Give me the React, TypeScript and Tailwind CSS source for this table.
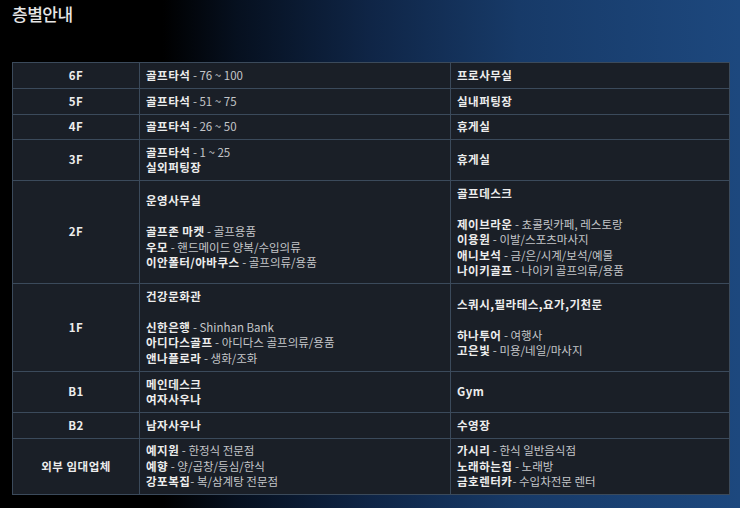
import React from "react";

type Line = { b?: string; t?: string } | null;

const rows: { floor: string; h: string; left: Line[]; right: Line[] }[] = [
  { floor: "6F", h: "h-[26px]", left: [{ b: "골프타석", t: " - 76 ~ 100" }], right: [{ b: "프로사무실" }] },
  { floor: "5F", h: "h-[26px]", left: [{ b: "골프타석", t: " - 51 ~ 75" }], right: [{ b: "실내퍼팅장" }] },
  { floor: "4F", h: "h-[25px]", left: [{ b: "골프타석", t: " - 26 ~ 50" }], right: [{ b: "휴게실" }] },
  {
    floor: "3F",
    h: "h-[41px]",
    left: [{ b: "골프타석", t: " - 1 ~ 25" }, { b: "실외퍼팅장" }],
    right: [{ b: "휴게실" }],
  },
  {
    floor: "2F",
    h: "h-[103px]",
    left: [
      { b: "운영사무실" },
      null,
      { b: "골프존 마켓", t: " - 골프용품" },
      { b: "우모", t: " - 핸드메이드 양복/수입의류" },
      { b: "이안폴터/아바쿠스", t: " - 골프의류/용품" },
    ],
    right: [
      { b: "골프데스크" },
      null,
      { b: "제이브라운", t: " - 쵸콜릿카페, 레스토랑" },
      { b: "이용원", t: " - 이발/스포츠마사지" },
      { b: "애니보석", t: " - 금/은/시계/보석/예물" },
      { b: "나이키골프", t: " - 나이키 골프의류/용품" },
    ],
  },
  {
    floor: "1F",
    h: "h-[88px]",
    left: [
      { b: "건강문화관" },
      null,
      { b: "신한은행", t: " - Shinhan Bank" },
      { b: "아디다스골프", t: " - 아디다스 골프의류/용품" },
      { b: "앤나플로라", t: " - 생화/조화" },
    ],
    right: [
      { b: "스쿼시,필라테스,요가,기천문" },
      null,
      { b: "하나투어", t: " - 여행사" },
      { b: "고은빛", t: " - 미용/네일/마사지" },
    ],
  },
  { floor: "B1", h: "h-[41px]", left: [{ b: "메인데스크" }, { b: "여자사우나" }], right: [{ b: "Gym" }] },
  { floor: "B2", h: "h-[26px]", left: [{ b: "남자사우나" }], right: [{ b: "수영장" }] },
  {
    floor: "외부 임대업체",
    h: "h-[56px]",
    left: [
      { b: "예지원", t: " - 한정식 전문점" },
      { b: "예향", t: " - 양/곱창/등심/한식" },
      { b: "강포복집", t: "- 복/삼계탕 전문점" },
    ],
    right: [
      { b: "가시리", t: " - 한식 일반음식점" },
      { b: "노래하는집", t: " - 노래방" },
      { b: "금호렌터카", t: "- 수입차전문 렌터" },
    ],
  },
];

function Cell({ lines }: { lines: Line[] }) {
  return (
    <td className="border border-[#3b4a5b] px-[6px] py-0 align-middle">
      {lines.map((l, i) =>
        l === null ? (
          <div key={i} className="h-[15.5px]" />
        ) : (
          <div key={i} className="h-[15.5px] whitespace-nowrap">
            {l.b && <span className="font-bold text-[#ededed] tracking-[0.5px]">{l.b}</span>}
            {l.t && <span className="text-[#c4c6c9]">{l.t}</span>}
          </div>
        )
      )}
    </td>
  );
}

export default function App() {
  return (
    <div
      className="w-[740px] h-[508px] overflow-hidden bg-[linear-gradient(90deg,#000_0%,#000_22%,#06101f_32%,#0f2546_50%,#173a68_70%,#1d487e_100%)]"
      style={{ fontFamily: '"Noto Sans CJK KR", "Noto Sans", sans-serif' }}
    >
      <div className="px-[12px] pt-[3px] h-[62px]">
        <h1 className="text-[17px] leading-[22px] text-[#e6e6e6] tracking-[-0.5px] font-medium">층별안내</h1>
      </div>
      <table className="ml-[12px] w-[717px] border-collapse bg-[#1a1f27] text-[11.5px] leading-[15.5px] table-fixed">
        <colgroup>
          <col className="w-[127px]" />
          <col className="w-[311px]" />
          <col className="w-[279px]" />
        </colgroup>
        <tbody>
          {rows.map((r) => (
            <tr key={r.floor} className={r.h}>
              <td className="border border-[#3b4a5b] p-0 text-center align-middle font-bold text-[#ededed] tracking-[0.5px]">
                {r.floor}
              </td>
              <Cell lines={r.left} />
              <Cell lines={r.right} />
            </tr>
          ))}
        </tbody>
      </table>
    </div>
  );
}
